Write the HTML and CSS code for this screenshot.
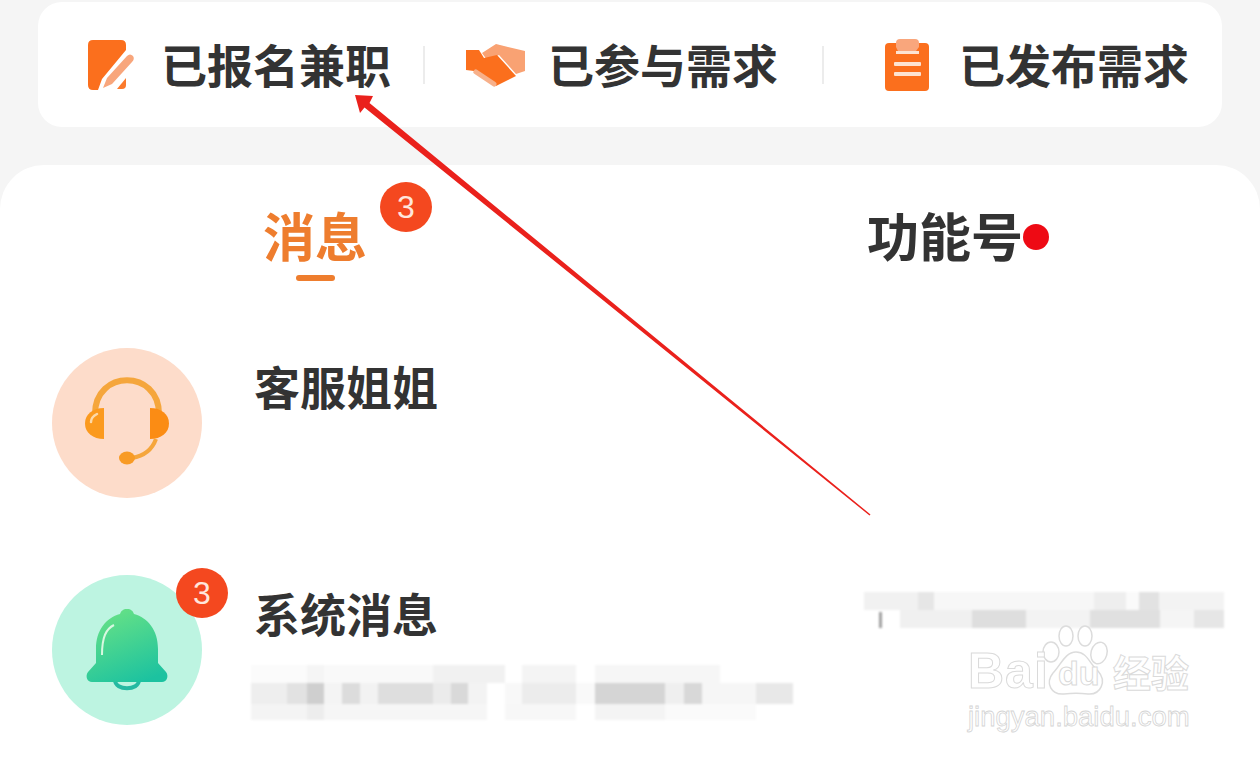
FILE: index.html
```html
<!DOCTYPE html>
<html lang="zh-CN">
<head>
    <meta charset="UTF-8">
    <meta name="viewport" content="width=device-width, initial-scale=1.0">
    <title>消息</title>
    <link rel="stylesheet" href="styles.css">
</head>
<body>
    <div class="stats">
        <div class="stat stat-signed">
            <svg class="stat-icon" width="48" height="50" viewBox="0 0 48 50">
                <path d="M5 0H33Q38 0 38 5V10L14 39L10 50H5Q0 50 0 45V5Q0 0 5 0Z" fill="#fb6f1d"/>
                <path d="M38 38V45Q38 49 34 49H29Z" fill="#fb7a2c"/>
                <path d="M15 48L19 38L39 16Q42 13 45 16Q47 19 44 22L24 44Z" fill="#f8a67c"/>
            </svg>
            <span class="stat-label">已报名兼职</span>
        </div>
        <div class="stat-line line-one"></div>
        <div class="stat stat-joined">
            <svg class="stat-icon" width="62" height="44" viewBox="0 0 62 44">
                <path d="M17 10L31 1L60 8V28L51 31L34 12L22 17Z" fill="#f9a273"/>
                <path d="M1 7H14L19 15L32 12L51 33L31 43L9 28L1 27Z" fill="#fb6f1d"/>
                <path d="M11 29L29 41" stroke="#f7b08a" stroke-width="5" stroke-linecap="round" fill="none"/>
            </svg>
            <span class="stat-label">已参与需求</span>
        </div>
        <div class="stat-line line-two"></div>
        <div class="stat stat-posted">
            <svg class="stat-icon" width="44" height="52" viewBox="0 0 44 52">
                <rect x="0" y="4" width="44" height="48" rx="4" fill="#fb6f1d"/>
                <path d="M11 4Q11 0 15 0H30Q34 0 34 4V8L31 12H13L11 8Z" fill="#f9a67c"/>
                <rect x="11" y="12" width="23" height="3" fill="#fde3d2"/>
                <rect x="9" y="23" width="27" height="4" rx="1" fill="#fde3d2"/>
                <rect x="9" y="33" width="27" height="4" rx="1" fill="#fde3d2"/>
            </svg>
            <span class="stat-label">已发布需求</span>
        </div>
    </div>

    <div class="panel">
        <div class="tabs">
            <div class="tab tab-active">
                <div class="tab-label">消息<span class="badge tab-badge">3</span></div>
                <div class="tab-bar"></div>
            </div>
            <div class="tab">
                <div class="tab-label">功能号<span class="dot"></span></div>
            </div>
        </div>

        <div class="rows">
            <div class="row">
                <div class="avatar avatar-service">
                    <svg width="150" height="150" viewBox="0 0 150 150">
                        <path d="M43 66C43 21 107 21 107 66" fill="none" stroke="#f5a63c" stroke-width="6"/>
                        <path d="M52 60V91C41 91 33 85 33 75.500C33 66 41 60 52 60Z" fill="#fb9a1e"/>
                        <path d="M98 60V91C109 91 117 85 117 75.500C117 66 109 60 98 60Z" fill="#fb8c14"/>
                        <path d="M39 74C39 70 41 68 45 66" fill="none" stroke="#fcd9a8" stroke-width="2.500" stroke-linecap="round"/>
                        <path d="M104 91C100 102 92 108 80 110" fill="none" stroke="#f5a63c" stroke-width="4"/>
                        <ellipse cx="75" cy="110" rx="8" ry="6.500" fill="#f89b25"/>
                    </svg>
                </div>
                <div class="row-body">
                    <div class="row-name">客服姐姐</div>
                </div>
            </div>
            <div class="row">
                <div class="avatar avatar-system">
                    <svg width="150" height="150" viewBox="0 0 150 150">
                        <defs>
                            <linearGradient id="bellFill" x1="0.250" y1="0" x2="0.700" y2="1">
                                <stop offset="0" stop-color="#68e285"/>
                                <stop offset="1" stop-color="#1cc2a0"/>
                            </linearGradient>
                        </defs>
                        <path d="M63 105C63 116 87 116 87 105" fill="none" stroke="#25b9a2" stroke-width="4"/>
                        <path d="M75 34C79 34 81 36 82 39C96 43 106 55 106 74V88L114 97C117 101 115 107 110 107H40C35 107 33 101 36 97L44 88V74C44 55 54 43 68 39C69 36 71 34 75 34Z" fill="url(#bellFill)"/>
                        <path d="M62 50C54 54 50 62 50 80" fill="none" stroke="#d8f8e0" stroke-width="2"/>
                    </svg>
                    <span class="badge avatar-badge">3</span>
                </div>
                <div class="row-body">
                    <div class="row-name">系统消息</div>
                    <div class="mosaic mosaic-preview">
                        <div class="preview-top"></div>
                        <div class="preview-mid"></div>
                        <div class="preview-low"></div>
                    </div>
                </div>
                <div class="mosaic mosaic-time">
                    <div class="time-top"></div>
                    <div class="time-low"></div>
                    <span class="time-tick"></span>
                </div>
            </div>
        </div>
    </div>

    <svg class="arrow" width="1260" height="759" viewBox="0 0 1260 759">
        <path d="M355 95L373 96L369.500 103L870.500 514.500L869.500 515.500L364.500 107.500L360 113Z" fill="#ea211c"/>
    </svg>

    <div class="watermark">
        <svg class="paw" width="72" height="72" viewBox="0 0 72 72">
            <g fill="#fff" stroke="#dcdcdc" stroke-width="1.500">
                <ellipse cx="10" cy="27" rx="8" ry="10"/>
                <ellipse cx="25" cy="11" rx="7" ry="10"/>
                <ellipse cx="44" cy="11" rx="7" ry="10"/>
                <ellipse cx="58" cy="28" rx="8" ry="11" transform="rotate(15 58 28)"/>
                <path d="M35 27C46 27 48 38 57 46C66 56 60 70 47 69C39 68 31 68 23 69C10 70 4 58 12 48C20 40 24 27 35 27Z"/>
            </g>
        </svg>
        <div class="mark-line">
            <span class="mark-bai">Bai</span><span class="mark-du">du</span><span class="mark-jy">经验</span>
        </div>
        <div class="mark-url">jingyan.baidu.com</div>
    </div>
</body>
</html>
```

FILE: styles.css
```css
* {
    box-sizing: border-box;
}
html, body {
    margin: 0;
    height: 759px;
    overflow: hidden;
}
body {
    position: relative;
    padding-top: 2px;
    background-color: #f5f5f5;
    color: #333;
    font-family: "Noto Sans CJK SC", "Noto Sans", sans-serif;
}

/* top card */
.stats {
    display: flex;
    align-items: center;
    height: 125px;
    margin: 0 38px;
    padding-left: 50px;
    background-color: white;
    border-radius: 24px;
}
.stat {
    display: flex;
    align-items: center;
}
.stat-label {
    padding-bottom: 4px;
    font-size: 46px;
    font-weight: 700;
    line-height: 60px;
    white-space: nowrap;
}
.stat-signed .stat-icon {
    margin-right: 25px;
}
.stat-joined .stat-icon {
    margin-right: 21px;
}
.stat-posted .stat-icon {
    margin-right: 30px;
}
.stat-line {
    width: 2px;
    height: 38px;
    background-color: #ececec;
}
.line-one {
    margin: 0 40px 0 32px;
}
.line-two {
    margin: 0 61px 0 44px;
}

/* messages panel */
.panel {
    height: 600px;
    margin-top: 38px;
    padding-top: 37px;
    background-color: white;
    border-radius: 44px 44px 0 0;
}
.tabs {
    display: grid;
    grid-template-columns: 1fr 1fr;
    height: 79px;
}
.tab {
    display: flex;
    flex-direction: column;
    align-items: center;
}
.tab-label {
    position: relative;
    font-size: 52px;
    font-weight: 700;
    line-height: 66px;
}
.tab-active .tab-label {
    color: #ee7d2e;
}
.tab-bar {
    width: 39px;
    height: 6px;
    margin-top: 7px;
    background-color: #ee7d2e;
    border-radius: 3px;
}
.badge {
    position: absolute;
    display: flex;
    align-items: center;
    justify-content: center;
    width: 52px;
    height: 50px;
    color: #ffe6dc;
    background-color: #f4481f;
    border-radius: 50%;
    font-family: "Liberation Sans", sans-serif;
    font-size: 32px;
    font-weight: 400;
    line-height: 1;
}
.tab-badge {
    top: -20px;
    left: 117px;
}
.dot {
    position: absolute;
    top: 22px;
    left: 156px;
    width: 26px;
    height: 26px;
    background-color: #ee0a14;
    border-radius: 50%;
}

.rows {
    display: flex;
    flex-direction: column;
    gap: 77px;
    margin-top: 67px;
}
.row {
    display: flex;
    height: 150px;
    padding-left: 52px;
}
.avatar {
    position: relative;
    flex: none;
    width: 150px;
    height: 150px;
    border-radius: 50%;
}
.avatar svg {
    display: block;
}
.avatar-service {
    background-color: #fddcca;
}
.avatar-system {
    background-color: #bdf4e1;
}
.avatar-badge {
    top: -7px;
    left: 124px;
}
.row-body {
    width: 540px;
    margin-left: 52px;
    padding-top: 13px;
}
.row-name {
    font-size: 46px;
    font-weight: 700;
    line-height: 48px;
}

/* blurred out text */
.mosaic {
    position: relative;
    display: flex;
    flex-direction: column;
    filter: blur(1px);
}
.mosaic-preview {
    width: 542px;
    height: 55px;
    margin: 29px 0 0 -3px;
}
.preview-top {
    height: 18px;
    background: linear-gradient(90deg, #fbfbfb 0 56px, #f5f5f5 56px 73px, #f9f9f9 73px 182px, #f1f1f1 182px 254px, #fff 254px 271px, #f4f4f4 271px 325px, #fff 325px 344px, #f6f6f6 344px 469px, #fff 469px);
}
.preview-mid {
    height: 21px;
    background: linear-gradient(90deg, #eeeeee 0 36px, #e2e2e2 36px 56px, #cfcfcf 56px 73px, #f4f4f4 73px 91px, #dcdcdc 91px 109px, #f2f2f2 109px 127px, #dedede 127px 182px, #ebebeb 182px 200px, #d9d9d9 200px 217px, #f3f3f3 217px 236px, #fff 236px 254px, #f8f8f8 254px 271px, #ececec 271px 325px, #f9f9f9 325px 344px, #d5d5d5 344px 414px, #efefef 414px 433px, #d8d8d8 433px 451px, #f6f6f6 451px 505px, #e8e8e8 505px 542px);
}
.preview-low {
    height: 16px;
    background: linear-gradient(90deg, #f4f4f4 0 56px, #ededed 56px 73px, #f6f6f6 73px 236px, #fff 236px 254px, #f7f7f7 254px 325px, #fff 325px 344px, #f4f4f4 344px 414px, #fafafa 414px 505px, #fff 505px);
}
.mosaic-time {
    flex: none;
    width: 360px;
    height: 36px;
    margin: 17px 36px 0 auto;
}
.time-top {
    height: 18px;
    background: linear-gradient(90deg, #f1f1f1 0 54px, #e6e6e6 54px 70px, #f7f7f7 70px 230px, #eeeeee 230px 262px, #fafafa 262px 275px, #e2e2e2 275px 295px, #f3f3f3 295px);
}
.time-low {
    height: 18px;
    background: linear-gradient(90deg, #fff 0 36px, #f0f0f0 36px 108px, #dedede 108px 162px, #f3f3f3 162px 226px, #e0e0e0 226px 296px, #f5f5f5 296px 330px, #e6e6e6 330px);
}
.time-tick {
    position: absolute;
    top: 20px;
    left: 15px;
    width: 3px;
    height: 16px;
    background-color: #a0a0a0;
}

/* overlays */
.arrow {
    position: absolute;
    top: 0;
    left: 0;
}
.watermark {
    position: absolute;
    top: 625px;
    left: 968px;
    width: 240px;
    color: white;
    font-family: "Liberation Sans", sans-serif;
}
.paw {
    position: absolute;
    top: 0;
    left: 73px;
}
.mark-line {
    position: relative;
    display: flex;
    align-items: flex-end;
    height: 74px;
    -webkit-text-stroke: 1px #dadada;
}
.mark-bai {
    width: 84px;
    font-size: 50px;
    font-weight: 700;
    line-height: 56px;
    letter-spacing: 1px;
}
.mark-du {
    width: 61px;
    padding-left: 6px;
    font-size: 34px;
    font-weight: 700;
    line-height: 52px;
}
.mark-jy {
    font-family: "Noto Sans CJK SC", sans-serif;
    font-size: 38px;
    font-weight: 700;
    line-height: 56px;
}
.mark-url {
    margin-top: 2px;
    font-size: 27.500px;
    line-height: 32px;
    white-space: nowrap;
    -webkit-text-stroke: 0.800px #d4d4d4;
}
```
